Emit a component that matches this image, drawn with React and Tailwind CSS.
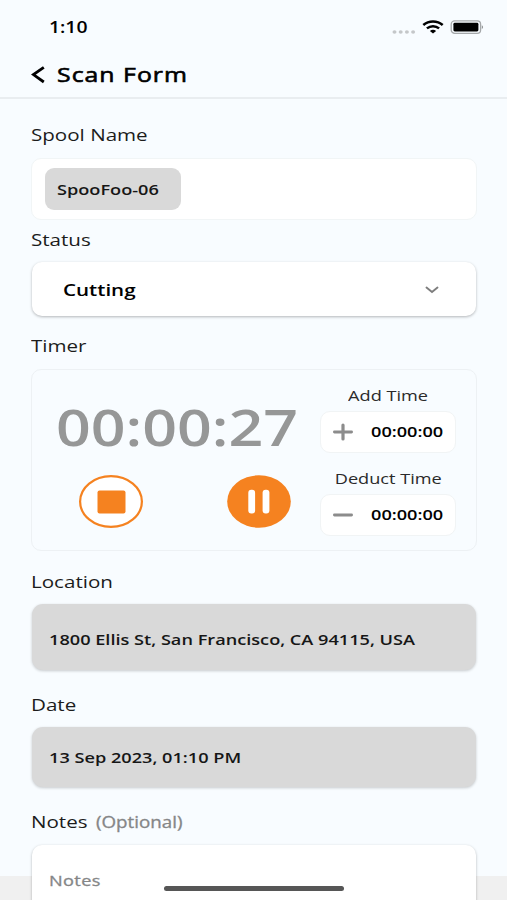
import { clsx } from 'clsx';

function Wide({ className, children }) {
  return (
    <span className={clsx('inline-block scale-x-[1.21] whitespace-nowrap', className)}>{children}</span>
  );
}

function StatusBar() {
  return (
    <div className="flex h-[54px] items-center pl-[49px] pr-[23px]">
      <Wide className="origin-left text-[16px] leading-6 font-semibold">1:10</Wide>
      <svg className="mt-[10px] ml-auto h-1 w-[24px]" viewBox="0 0 24 4" fill="#c4c7c9" aria-hidden="true">
        <ellipse cx="2.5" cy="2" rx="2" ry="1.7" />
        <ellipse cx="8.7" cy="2" rx="2" ry="1.7" />
        <ellipse cx="14.9" cy="2" rx="2" ry="1.7" />
        <ellipse cx="21.1" cy="2" rx="2" ry="1.7" />
      </svg>
      <svg className="ml-[6px] h-[14px] w-[22px]" viewBox="0 0 22 14" fill="none" stroke="#000" aria-hidden="true">
        <path d="M1.3 5C6.8 .3 15.2 .3 20.7 5" strokeWidth="2.6" />
        <path d="M4.9 8.4C8.4 5.4 13.6 5.4 17.1 8.4" strokeWidth="2.5" />
        <path d="M7.9 11C9.7 9.3 12.3 9.3 14.1 11L11 13.6Z" fill="#000" stroke="none" />
      </svg>
      <svg className="ml-[6px] h-[14px] w-[34px] shrink-0" viewBox="0 0 34 14" aria-hidden="true">
        <rect x="1.2" y=".9" width="29.4" height="12.4" rx="3.4" fill="none" stroke="#a5a8aa" strokeWidth="1.3" />
        <rect x="3.4" y="2.8" width="25" height="8.6" rx="1.4" fill="#000" />
        <path d="M31.8 5.2C33.5 5.8 33.5 8.4 31.8 9Z" fill="#909395" />
      </svg>
    </div>
  );
}

function Label({ className, hint, children }) {
  return (
    <div className={clsx('flex h-6 items-center text-[17px] leading-6 text-[#1c1c1c]', className)}>
      <Wide className="origin-left">{children}</Wide>
      {hint && (
        <Wide className="ml-[18px] origin-left text-[15.5px] text-[#858687] [-webkit-text-stroke:0.3px]">{hint}</Wide>
      )}
    </div>
  );
}

function TimeAdjust({ label, minus, className }) {
  return (
    <div className={clsx('flex w-[136px] flex-col items-center', className)}>
      <Wide className="text-[15px] leading-6 text-[#2a2a2a]">{label}</Wide>
      <button
        type="button"
        className="mt-[4px] flex h-[42px] w-full items-center rounded-[10px] border border-[#f1f4f5] bg-white pl-[12px]"
      >
        <svg className="h-5 w-5" viewBox="0 0 20 20" stroke="#8c8c8c" strokeLinecap="round" aria-hidden="true">
          <path d="M1.4 10H18.6" strokeWidth="2.8" />
          {!minus && <path d="M10 3.1V16.9" strokeWidth="3.2" />}
        </svg>
        <Wide className="mb-[2px] ml-[18px] origin-left text-[15px] leading-6 font-semibold text-black">00:00:00</Wide>
      </button>
    </div>
  );
}

function Timer() {
  return (
    <div className="mt-[11px] flex h-[182px] rounded-[10px] border border-[#edf1f4] pl-[24px]">
      <div className="w-[264px]">
        <Wide className="mt-[21px] block origin-left text-[50.3px] leading-[72px] font-semibold text-[#969797]">
          00:00:27
        </Wide>
        <div className="mt-[12px] flex pl-[22.5px]">
          <button type="button" aria-label="Stop">
            <svg className="h-[53px] w-[64px]" viewBox="0 0 64 53">
              <ellipse cx="32" cy="26.5" rx="30.9" ry="25.4" fill="#fff" stroke="#f58220" strokeWidth="2.2" />
              <rect x="18.5" y="15.5" width="28" height="23" rx="2" fill="#f58220" />
            </svg>
          </button>
          <button type="button" aria-label="Pause" className="ml-[84px]">
            <svg className="h-[53px] w-[64px]" viewBox="0 0 64 53">
              <ellipse cx="32" cy="26.5" rx="31.8" ry="26.2" fill="#f58220" />
              <rect x="21.3" y="14.8" width="6.8" height="23.6" rx="3" fill="#fff" />
              <rect x="35.6" y="14.8" width="6.8" height="23.6" rx="3" fill="#fff" />
            </svg>
          </button>
        </div>
      </div>
      <div className="pt-[13px]">
        <TimeAdjust label="Add Time" />
        <TimeAdjust label="Deduct Time" minus className="mt-[13px]" />
      </div>
    </div>
  );
}

function ReadOnlyField({ className, children }) {
  return (
    <div
      className={clsx(
        'mx-px flex items-center rounded-[11px] bg-[#d9d9d9] pl-[17px] shadow-[0_1px_3px_rgba(0,0,0,0.2)]',
        className
      )}
    >
      <Wide className="origin-left text-[15px] leading-6 font-semibold text-[#161616]">{children}</Wide>
    </div>
  );
}

export default function App() {
  return (
    <div className="relative h-[900px] w-[507px] overflow-hidden bg-[linear-gradient(#f8fcff_876px,#f0f0f0_876px)] font-['Open_Sans',sans-serif] text-black">
      <header className="h-[99px] border-b-2 border-[#e9edf0]">
        <StatusBar />
        <div className="flex h-[42px] items-center pl-[31px]">
          <svg className="h-[18px] w-[15px]" viewBox="0 0 15 18" fill="none" stroke="#000" aria-hidden="true">
            <path d="M12.8 1.3L2.4 8.6L12.8 16" strokeWidth="2.8" />
          </svg>
          <Wide className="mb-[2px] ml-[11px] origin-left text-[20.5px] leading-7 tracking-[0.85px] [-webkit-text-stroke:0.6px]">
            Scan Form
          </Wide>
        </div>
      </header>

      <main className="pr-[30px] pl-[31px]">
        <Label className="mt-[24px]">Spool Name</Label>
        <div className="mt-[11px] flex h-[62px] items-center rounded-[10px] border border-[#f1f5f6] bg-white pl-[13px]">
          <div className="flex h-[42px] w-[136px] items-center rounded-[9px] bg-[#d9d9d9] pl-[12px]">
            <Wide className="origin-left text-[15px] leading-6 font-semibold text-[#161616]">SpooFoo-06</Wide>
          </div>
        </div>

        <Label className="mt-[8px]">Status</Label>
        <div className="mx-px mt-[10px] flex h-[54px] items-center justify-between rounded-[10px] bg-white pt-[2px] pr-[37px] pl-[31px] shadow-[0_1px_3px_rgba(0,0,0,0.28)]">
          <Wide className="origin-left text-[17px] leading-6 font-semibold">Cutting</Wide>
          <svg className="h-[8px] w-[14px]" viewBox="0 0 14 8" fill="none" stroke="#7d7d7d" aria-hidden="true">
            <path d="M1.5 1.6L7 6L12.5 1.6" strokeWidth="1.9" strokeLinecap="round" />
          </svg>
        </div>

        <Label className="mt-[18px]">Timer</Label>
        <Timer />

        <Label className="mt-[19px]">Location</Label>
        <ReadOnlyField className="mt-[10px] h-[66px] pt-[4px]">1800 Ellis St, San Francisco, CA 94115, USA</ReadOnlyField>

        <Label className="mt-[23px]">Date</Label>
        <ReadOnlyField className="mt-[10px] h-[60px]">13 Sep 2023, 01:10 PM</ReadOnlyField>

        <Label className="mt-[23px]" hint="(Optional)">
          Notes
        </Label>
        <div className="mx-px mt-[11px] h-[90px] rounded-[10px] bg-white pt-[23px] pl-[17px] shadow-[0_1px_3px_rgba(0,0,0,0.28)]">
          <Wide className="origin-left text-[15px] leading-6 tracking-[0.3px] text-[#858687] [-webkit-text-stroke:0.3px]">
            Notes
          </Wide>
        </div>
      </main>

      <div className="absolute top-[886px] left-[164px] h-[5px] w-[180px] rounded-full bg-[#565656]" />
    </div>
  );
}
